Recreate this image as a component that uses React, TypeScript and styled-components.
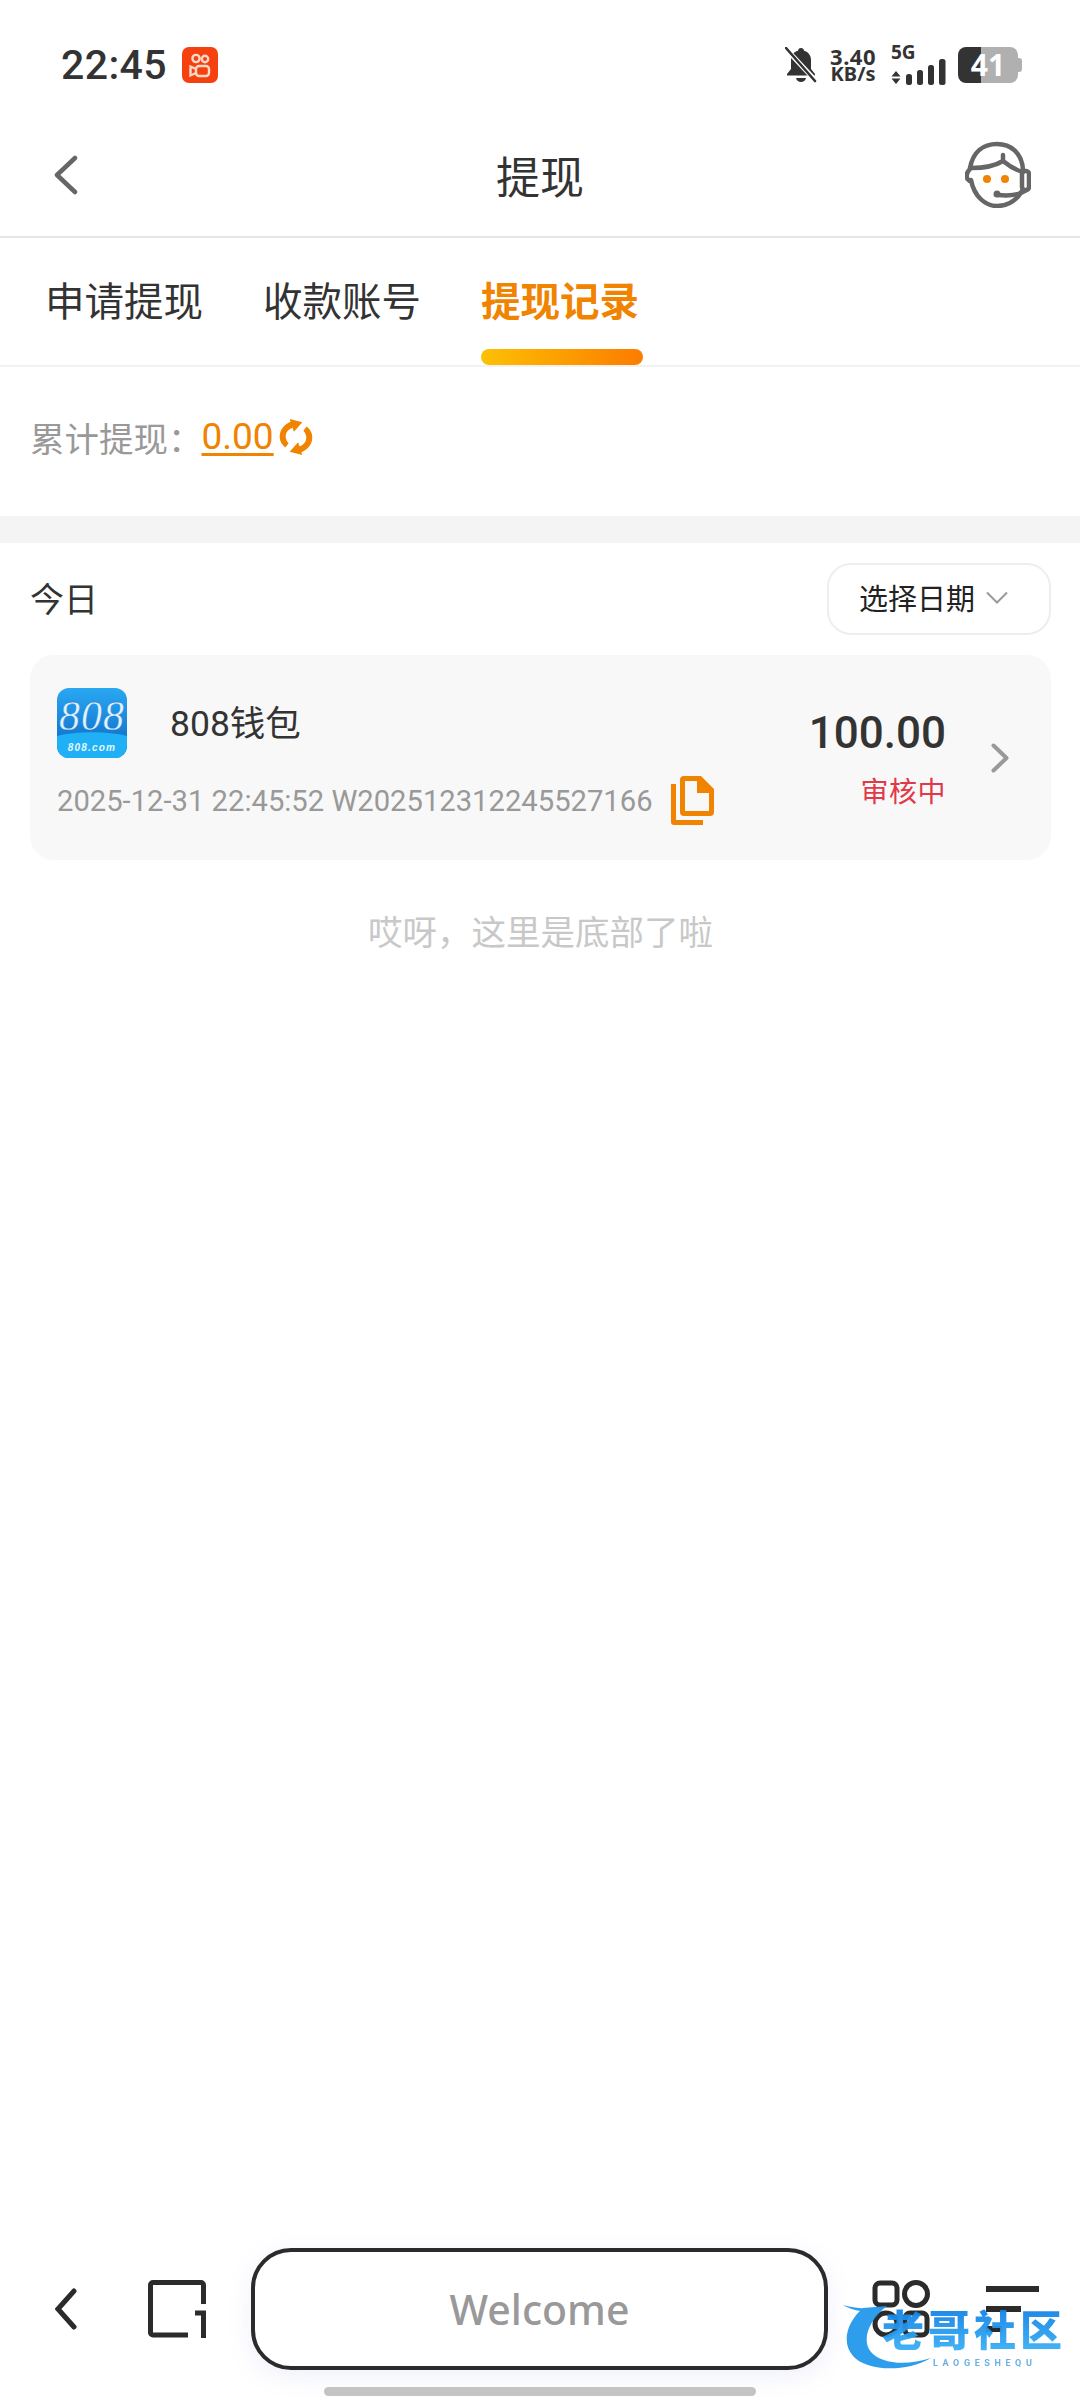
import React from 'react';
import styled, { createGlobalStyle } from 'styled-components';

const sans = `Roboto, "Noto Sans CJK SC", sans-serif`;
const orange = '#f08300';

const GlobalStyle = createGlobalStyle`
  html, body {
    margin: 0;
    padding: 0;
    background: #fff;
  }
  * {
    box-sizing: border-box;
  }
`;

const Page = styled.div`
  position: relative;
  display: flex;
  flex-direction: column;
  width: 1080px;
  height: 2400px;
  overflow: hidden;
  background: #fff;
  font-family: ${sans};
  color: #333;
`;

const StatusBar = styled.div`
  display: flex;
  align-items: center;
  height: 120px;
  padding: 9px 62px 0 61px;
`;

const Time = styled.span`
  font-size: 41px;
  font-weight: 500;
  letter-spacing: 0.4px;
  color: #333;
`;

const AppBadge = styled.svg`
  width: 36px;
  height: 36px;
  margin-left: 15px;
`;

const StatusRight = styled.div`
  display: flex;
  align-items: center;
  margin-left: auto;
`;

const Speed = styled.div`
  display: flex;
  flex-direction: column;
  align-items: center;
  margin-left: 13px;
  font-weight: 700;
  font-family: "Noto Sans", sans-serif;
  color: #333;
  line-height: 17px;
`;

const SpeedValue = styled.span`
  font-size: 22px;
  letter-spacing: 0.5px;
`;

const SpeedUnit = styled.span`
  font-size: 20px;
`;

const Network = styled.div`
  display: flex;
  flex-direction: column;
  margin-left: 15px;
  width: 56px;
`;

const NetworkLabel = styled.span`
  font-family: "Noto Sans", sans-serif;
  font-size: 19px;
  font-weight: 700;
  line-height: 14px;
  color: #333;
`;

const Battery = styled.div`
  position: relative;
  display: flex;
  align-items: center;
  justify-content: center;
  width: 60px;
  height: 36px;
  margin-left: 11px;
  border-radius: 8px;
  background: linear-gradient(90deg, #333 0 23px, #b0b0b0 23px);
  color: #fff;
  font-size: 30px;
  font-weight: 700;
  font-family: "Noto Sans", sans-serif;

  &::after {
    content: '';
    position: absolute;
    right: -4px;
    top: 11px;
    width: 4px;
    height: 14px;
    border-radius: 0 3px 3px 0;
    background: #b0b0b0;
  }
`;

const NavBar = styled.div`
  display: grid;
  grid-template-columns: 1fr auto 1fr;
  align-items: center;
  height: 118px;
  padding: 0 49px 7px 49px;
  border-bottom: 2px solid #e6e6e6;
`;

const NavBack = styled.svg`
  margin-left: 5px;
`;

const NavTitle = styled.h1`
  margin: 0;
  font-size: 44px;
  font-weight: 400;
  color: #333;
`;

const NavEnd = styled.div`
  display: flex;
  justify-content: flex-end;
`;

const Tabs = styled.div`
  display: flex;
  gap: 60px;
  height: 129px;
  padding-left: 45px;
  border-bottom: 2px solid #f2f2f2;
`;

const Tab = styled.div<{ $active?: boolean }>`
  display: flex;
  flex-direction: column;
  font-size: 39.5px;
  width: 158px;
  white-space: nowrap;
  line-height: 56px;
  padding-top: 37px;
  font-weight: ${(p) => (p.$active ? 700 : 400)};
  color: ${(p) => (p.$active ? orange : '#333')};

  ${(p) =>
    p.$active &&
    `
    &::after {
      content: '';
      display: block;
      width: 162px;
      height: 18px;
      margin: 18px 0 0 0;
      border-radius: 9px;
      background: linear-gradient(90deg, #fdc003, #fb7c00);
    }
  `}
`;

const TotalRow = styled.div`
  display: flex;
  align-items: center;
  height: 149px;
  padding: 0 0 10px 30px;
  font-size: 34.5px;
  color: #999;
`;

const TotalValue = styled.span`
  margin-left: -1px;
  color: ${orange};
  font-size: 37px;
  line-height: 44px;
  text-decoration: underline;
  text-underline-offset: 4px;
  text-decoration-thickness: 3px;
`;

const RefreshIcon = styled.svg`
  width: 38px;
  height: 38px;
  margin-left: 3px;
`;

const Band = styled.div`
  height: 27px;
  background: #f4f4f4;
`;

const Main = styled.main`
  flex: 1;
  display: flex;
  flex-direction: column;
  padding: 20px 29px 0 30px;
`;

const DayRow = styled.div`
  display: flex;
  align-items: center;
  justify-content: space-between;
  height: 72px;
  font-size: 34px;
  padding-bottom: 3px;
  color: #333;
`;

const DateButton = styled.button`
  display: flex;
  align-items: center;
  gap: 11px;
  width: 224px;
  height: 72px;
  margin-bottom: -3px;
  padding: 0 0 4px 30px;
  background: #fff;
  border: 2px solid #eee;
  border-radius: 24px;
  font-family: ${sans};
  font-size: 29px;
  color: #222;
`;

const Card = styled.section`
  display: flex;
  align-items: stretch;
  height: 205px;
  margin-top: 20px;
  padding: 33px 42px 0 27px;
  background: #f8f8f8;
  border-radius: 24px;
`;

const CardBody = styled.div`
  flex: 1;
  display: flex;
  flex-direction: column;
`;

const WalletRow = styled.div`
  display: flex;
  align-items: center;
  gap: 43px;
  font-size: 35.5px;
  color: #333;
`;

const WalletName = styled.span`
  padding-bottom: 5px;
`;

const OrderRow = styled.div`
  display: flex;
  align-items: center;
  gap: 18px;
  margin-top: 18px;
  font-size: 29.2px;
  color: #999;
  white-space: nowrap;
`;

const AmountColumn = styled.div`
  display: flex;
  flex-direction: column;
  align-items: flex-end;
  padding-top: 20px;
  margin-right: 45px;
`;

const Amount = styled.span`
  font-size: 44px;
  font-weight: 500;
  line-height: 50px;
  color: #333;
`;

const Status = styled.span`
  margin-top: 12px;
  font-size: 28px;
  letter-spacing: 0.5px;
  color: #e0394a;
`;

const ChevronCell = styled.div`
  display: flex;
  align-items: center;
  padding-bottom: 33px;
`;

const EndNote = styled.p`
  margin: 48px 0 0;
  text-align: center;
  font-size: 34.5px;
  line-height: 50px;
  color: #c8c8c8;
`;

const BottomArea = styled.footer`
  display: flex;
  flex-direction: column;
  align-items: center;
  height: 152px;
`;

const Toolbar = styled.div`
  display: flex;
  align-items: center;
  width: 100%;
  height: 122px;
  padding-left: 55px;
`;

const TabsSvg = styled.svg`
  margin-left: 71px;
`;

const MenuSvg = styled.svg`
  margin-left: 56px;
`;

const AddressBar = styled.div`
  display: flex;
  align-items: center;
  justify-content: center;
  width: 577px;
  height: 122px;
  margin: 0 44px 0 45px;
  border: 4px solid #2b2b2b;
  border-radius: 40px;
  background: #fff;
  box-shadow: 0 6px 24px rgba(120, 130, 220, 0.12);
  font-family: "Noto Sans", sans-serif;
  font-size: 41px;
  font-weight: 500;
  color: #999;
`;

const HomeBar = styled.div`
  width: 432px;
  height: 9px;
  margin-top: 17px;
  border-radius: 5px;
  background: #c4c4c4;
`;

const Watermark = styled.div`
  position: absolute;
  right: 17px;
  bottom: 28px;
  width: 220px;
  height: 72px;
  opacity: 0.95;
`;

const WatermarkSwoosh = styled.svg`
  position: absolute;
  left: 0;
  top: 0;
  width: 130px;
  height: 72px;
`;

const WatermarkTitle = styled.div`
  position: absolute;
  left: 39px;
  top: 9px;
  font-size: 42px;
  line-height: 46px;
  letter-spacing: 4px;
  font-weight: 900;
  white-space: nowrap;
  background: linear-gradient(180deg, #1483e6, #3db4f7);
  -webkit-background-clip: text;
  background-clip: text;
  color: transparent;
`;

const WatermarkSub = styled.div`
  position: absolute;
  left: 90px;
  top: 58px;
  font-size: 9px;
  line-height: 10px;
  letter-spacing: 4.6px;
  font-weight: 700;
  white-space: nowrap;
  color: #62ace4;
`;

const KuaishouBadge = () => (
  <AppBadge viewBox="0 0 36 36">
    <rect width="36" height="36" rx="7" fill="#f5400f" />
    <g fill="none" stroke="#ffd9c8" strokeWidth="2.4">
      <circle cx="14" cy="11.5" r="3.6" />
      <circle cx="23" cy="12" r="3.2" />
      <rect x="14" y="19" width="13" height="10" rx="3" />
      <path d="M14 22l-5.500-2.500v9l5.500-2.500" />
    </g>
  </AppBadge>
);

const BellOff = () => (
  <svg width="32" height="36" viewBox="0 0 32 36">
    <path
      d="M16 1c-1.800 0-3 1.200-3 2.800C8.500 5 6 8.600 6 13v9l-4 5v1.500h28V27l-4-5v-9c0-4.400-2.500-8-7-9.200C19 2.200 17.800 1 16 1z"
      fill="#333"
    />
    <path d="M11 31c.6 2.400 2.600 4 5 4s4.400-1.600 5-4z" fill="#333" />
    <path d="M1 2l30 32" stroke="#fff" strokeWidth="5" />
    <path d="M1 1l29 33" stroke="#333" strokeWidth="2.600" strokeLinecap="round" />
  </svg>
);

const SignalBars = () => (
  <svg width="56" height="26" viewBox="0 0 56 26">
    <path d="M5 0l4.500 5.500h-9zM5 13L.5 7.500h9z" transform="translate(0 12)" fill="#333" />
    <rect x="15" y="15" width="6" height="11" rx="2.500" fill="#333" />
    <rect x="26" y="11" width="6" height="15" rx="2.500" fill="#333" />
    <rect x="37" y="6" width="6" height="20" rx="2.500" fill="#333" />
    <rect x="48" y="0" width="6.500" height="26" rx="2.500" fill="#333" />
  </svg>
);

const HeadsetAgent = () => (
  <svg width="66" height="67" viewBox="0 0 66 67" fill="none" stroke="#666" strokeWidth="4.500" strokeLinecap="round">
    <path d="M5 27C8 11 18 3 32 3c14 0 25 9 26 26" />
    <path d="M6 27c12 0 24-2 32-7v-6M38 20c6 5 13 9 20 11" />
    <path d="M5 28C2 31 1 35 2.500 38c1 1.500 2 2 3.500 2" />
    <path d="M6 39c3 16 14 26 26 26 11 0 19-5 25-15" />
    <rect x="57" y="30" width="7" height="19" rx="3" />
    <path d="M60 50c-6 4-16 5-27 4" />
    <circle cx="32" cy="53" r="3.500" fill="#666" stroke="none" />
    <circle cx="22" cy="38" r="4" fill={orange} stroke="none" />
    <circle cx="40" cy="38" r="4" fill={orange} stroke="none" />
  </svg>
);

const Refresh = () => (
  <RefreshIcon viewBox="0 0 36 36">
    <path d="M15 3C6 5 1 13 3 21c1 3 2.500 5 5 7l3-4c-4-4-4.500-12 4-15z" fill={orange} />
    <path d="M12 1l12 3-8 9z" fill={orange} />
    <path d="M21 33c9-2 14-10 12-18-1-3-2.500-5-5-7l-3 4c4 4 4.500 12-4 15z" fill={orange} />
    <path d="M24 35l-12-3 8-9z" fill={orange} />
  </RefreshIcon>
);

const WalletLogo = () => (
  <svg width="70" height="70" viewBox="0 0 70 70">
    <defs>
      <linearGradient id="logoTop" x1="0" y1="0" x2="0" y2="1">
        <stop offset="0" stopColor="#2aa8f2" />
        <stop offset="1" stopColor="#0a63c2" />
      </linearGradient>
      <clipPath id="logoClip">
        <rect width="70" height="70" rx="12" />
      </clipPath>
    </defs>
    <g clipPath="url(#logoClip)">
      <rect width="70" height="70" fill="url(#logoTop)" />
      <path d="M0 48c20-5 50-5 70 0v22H0z" fill="#1fb0f5" />
      <text
        x="35"
        y="42"
        textAnchor="middle"
        fontFamily="Liberation Serif, serif"
        fontStyle="italic"
        fontSize="42"
        letterSpacing="1"
        stroke="#0d6fc9"
        strokeWidth="0.4"
        fill="#dff3ff"
      >
        808
      </text>
      <text
        x="35"
        y="63"
        textAnchor="middle"
        fontFamily="Liberation Sans, sans-serif"
        fontStyle="italic"
        fontWeight="700"
        fontSize="10"
        letterSpacing="1.2"
        fill="#e6f7ff"
      >
        808.com
      </text>
    </g>
  </svg>
);

const CopyIcon = () => (
  <svg width="43" height="49" viewBox="0 0 43 49" fill={orange}>
    <path
      fillRule="evenodd"
      d="M13 0h17l13 13v23a4 4 0 0 1-4 4H13a4 4 0 0 1-4-4V4a4 4 0 0 1 4-4zm1 5v30h24V17H26V5z"
    />
    <path d="M0 8h5v36h27v5H3a3 3 0 0 1-3-3z" />
  </svg>
);

const TabsIcon = () => (
  <TabsSvg width="58" height="58" viewBox="0 0 58 58" fill="none" stroke="#2b2b2b" strokeWidth="5">
    <path d="M40 55H5a2.500 2.500 0 0 1-2.500-2.500V5A2.500 2.500 0 0 1 5 2.500h48A2.500 2.500 0 0 1 55.500 5v19" />
    <path d="M47 33h8.500v25" />
  </TabsSvg>
);

const GridIcon = () => (
  <svg width="58" height="58" viewBox="0 0 58 58" fill="none" stroke="#2b2b2b" strokeWidth="5">
    <rect x="3" y="3" width="22" height="22" rx="5" />
    <circle cx="44" cy="14" r="11.500" />
    <rect x="3" y="33" width="22" height="22" rx="11" />
    <rect x="33" y="33" width="22" height="22" rx="5" />
  </svg>
);

const MenuIcon = () => (
  <MenuSvg width="53" height="46" viewBox="0 0 53 46" fill="#2b2b2b">
    <rect x="0" y="0" width="53" height="6" />
    <rect x="0" y="20" width="35" height="6" />
    <rect x="0" y="40" width="16" height="6" />
  </MenuSvg>
);

export default function App() {
  return (
    <Page>
      <GlobalStyle />
      <StatusBar>
        <Time>22:45</Time>
        <KuaishouBadge />
        <StatusRight>
          <BellOff />
          <Speed>
            <SpeedValue>3.40</SpeedValue>
            <SpeedUnit>KB/s</SpeedUnit>
          </Speed>
          <Network>
            <NetworkLabel>5G</NetworkLabel>
            <SignalBars />
          </Network>
          <Battery>41</Battery>
        </StatusRight>
      </StatusBar>

      <NavBar>
        <NavBack width="24" height="40" viewBox="0 0 24 40" fill="none" stroke="#666" strokeWidth="4.500" strokeLinecap="round" strokeLinejoin="round">
          <path d="M21 3L3 20l18 17" />
        </NavBack>
        <NavTitle>提现</NavTitle>
        <NavEnd>
          <HeadsetAgent />
        </NavEnd>
      </NavBar>

      <Tabs>
        <Tab>申请提现</Tab>
        <Tab>收款账号</Tab>
        <Tab $active>提现记录</Tab>
      </Tabs>

      <TotalRow>
        累计提现：
        <TotalValue>0.00</TotalValue>
        <Refresh />
      </TotalRow>
      <Band />

      <Main>
        <DayRow>
          今日
          <DateButton>
            选择日期
            <svg width="22" height="13" viewBox="0 0 22 13" fill="none" stroke="#999" strokeWidth="2">
              <path d="M1 1.500l10 10 10-10" />
            </svg>
          </DateButton>
        </DayRow>

        <Card>
          <CardBody>
            <WalletRow>
              <WalletLogo />
              <WalletName>808钱包</WalletName>
            </WalletRow>
            <OrderRow>
              2025-12-31 22:45:52 W202512312245527166
              <CopyIcon />
            </OrderRow>
          </CardBody>
          <AmountColumn>
            <Amount>100.00</Amount>
            <Status>审核中</Status>
          </AmountColumn>
          <ChevronCell>
            <svg width="18" height="30" viewBox="0 0 18 30" fill="none" stroke="#999" strokeWidth="4" strokeLinecap="round" strokeLinejoin="round">
              <path d="M2.500 2.500L15.500 15 2.500 27.500" />
            </svg>
          </ChevronCell>
        </Card>

        <EndNote>哎呀，这里是底部了啦</EndNote>
      </Main>

      <BottomArea>
        <Toolbar>
          <svg width="22" height="42" viewBox="0 0 22 42" fill="none" stroke="#2b2b2b" strokeWidth="5" strokeLinecap="round">
            <path d="M19 3L3 21l16 18" />
          </svg>
          <TabsIcon />
          <AddressBar>Welcome</AddressBar>
          <GridIcon />
          <MenuIcon />
        </Toolbar>
        <HomeBar />
      </BottomArea>

      <Watermark>
        <WatermarkSwoosh viewBox="0 0 130 72">
          <path d="M0 5c10 3 22 4 36 3l-6 4C20 12 8 10 0 5z" fill="#2398ea" />
          <path
            d="M20 8C4 22-2 42 10 56c12 14 50 18 78 2-24 8-50 6-60-6C18 40 26 20 44 6z"
            fill="#2398ea"
          />
        </WatermarkSwoosh>
        <WatermarkTitle>老哥社区</WatermarkTitle>
        <WatermarkSub>LAOGESHEQU</WatermarkSub>
      </Watermark>
    </Page>
  );
}
